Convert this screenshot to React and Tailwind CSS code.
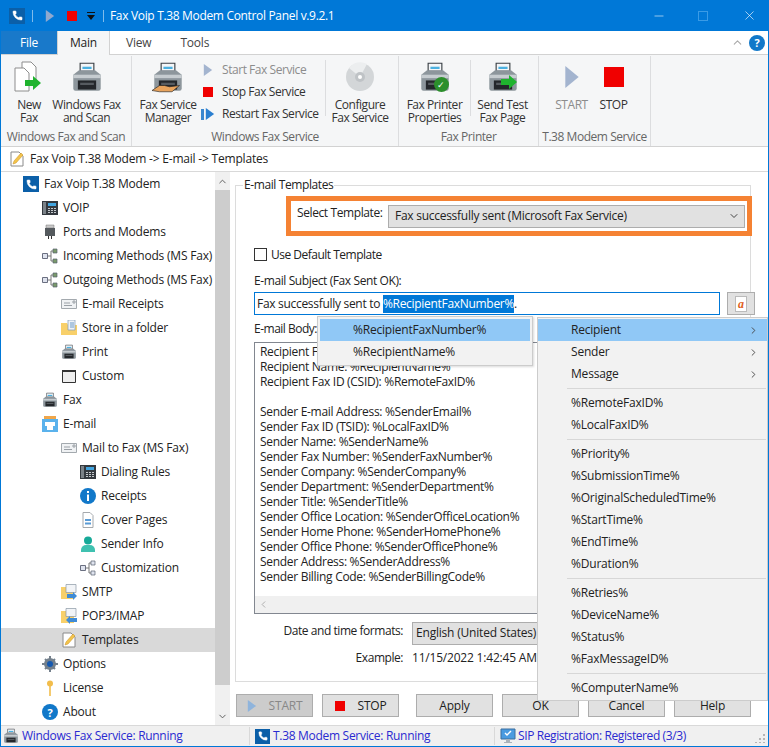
import { Phone, ChevronUp, ChevronDown, ChevronLeft, ChevronRight, X, Minus } from 'lucide-react';

const PhoneBox = ({ size = 16 }) => (
  <span className="flex shrink-0 items-center justify-center bg-[#0b5fa8]" style={{ width: size, height: size }}>
    <Phone size={size - 5} className="fill-white text-white" strokeWidth={1} />
  </span>
);

const Play = ({ className = 'h-3 w-3', color = '#a3b4cf' }) => (
  <svg viewBox="0 0 12 14" preserveAspectRatio="none" className={className}><path d="M1 0l10 7-10 7z" fill={color} /></svg>
);

const Stop = ({ className = 'h-[10px] w-[10px]' }) => <span className={`block shrink-0 bg-[#f00000] ${className}`} />;

const PrinterIcon = ({ className = 'h-7 w-7' }) => (
  <svg viewBox="0 0 28 28" className={className}>
    <path d="M8 2h12v7H8z" fill="#f4f6f8" stroke="#3a3f45" />
    <path d="M10 5h8v2h-8z" fill="#4bb0e0" />
    <path d="M2 12l5-4h14l5 4v12a2 2 0 0 1-2 2H4a2 2 0 0 1-2-2z" fill="#8d969c" />
    <path d="M2 12h24v3H2z" fill="#c6ccd0" />
    <path d="M6 17h16v8H6z" fill="#24272b" />
    <path d="M8 19h12v2H8z" fill="#565b60" />
  </svg>
);

const GreenArrow = ({ className }) => (
  <svg viewBox="0 0 16 14" className={className}><path d="M0 4h8V0l8 7-8 7v-4H0z" fill="#1fb32e" /></svg>
);

const NewFaxIcon = () => (
  <span className="relative block h-8 w-8">
    <svg viewBox="0 0 32 32" className="h-8 w-8">
      <path d="M9 1h9l5 5v18H9z" fill="#fff" stroke="#8d8d8d" />
      <path d="M2 7h9l5 5v18H2z" fill="#fff" stroke="#8d8d8d" />
    </svg>
    <GreenArrow className="absolute left-[12px] top-[15px] h-[14px] w-4" />
  </span>
);

const CdIcon = () => (
  <svg viewBox="0 0 30 30" className="h-[30px] w-[30px]">
    <circle cx="15" cy="15" r="14" fill="#d3d6d8" />
    <path d="M15 15L4 6a14 14 0 0 1 18-4z" fill="#eceeef" />
    <circle cx="15" cy="15" r="5" fill="#bfc3c6" />
    <circle cx="15" cy="15" r="2" fill="#fff" />
  </svg>
);

const NoteIcon = ({ className = 'h-4 w-4' }) => (
  <svg viewBox="0 0 16 16" className={className}>
    <path d="M2 1h8l4 4v10H2z" fill="#fff" stroke="#8a8a8a" />
    <path d="M4 13l1-3 7-8 2 2-7 8z" fill="#f3c44c" stroke="#c98f1f" strokeWidth=".5" />
  </svg>
);

const VoipIcon = () => (
  <svg viewBox="0 0 16 16" className="h-4 w-4">
    <path d="M0 1h16v14H0z" fill="#34393f" />
    <path d="M1 2h3v12H1z" fill="#7b8288" />
    <path d="M6 3h8v3H6z" fill="#42a5e0" />
    <path d="M6 8h2v1H6zM9 8h2v1H9zM12 8h2v1h-2zM6 10h2v1H6zM9 10h2v1H9zM12 10h2v1h-2zM6 12h2v1H6zM9 12h2v1H9zM12 12h2v1h-2z" fill="#c3c8cc" />
  </svg>
);

const PortIcon = () => (
  <svg viewBox="0 0 16 16" className="h-4 w-4">
    <path d="M4 1h8v3H4z" fill="#c9c9c9" stroke="#777" strokeWidth=".5" />
    <path d="M3 4h10v8H3z" fill="#555a5e" />
    <path d="M6 12h1v3H6zM9 12h1v3H9z" fill="#333" />
  </svg>
);

const TreeNodesIcon = ({ fill = '#7a9a6a' }) => (
  <svg viewBox="0 0 16 16" className="h-4 w-4">
    <path d="M5 8h4M9 3v10M9 3h2M9 13h2" stroke="#777" fill="none" />
    <path d="M.5 5.500h5v5h-5z" fill="#dfe3ee" stroke="#6a6f80" />
    <path d="M11 1h4v4h-4zM11 11h4v4h-4z" fill={fill} stroke="#5a6270" strokeWidth=".7" />
  </svg>
);

const EnvelopeIcon = () => (
  <svg viewBox="0 0 16 16" className="h-4 w-4">
    <path d="M.5 3.500h15v9H.5z" fill="#f0f2f4" stroke="#a3a9ae" />
    <path d="M3 7h6M3 9.500h8M12 5h2v2h-2z" stroke="#9aa0a6" fill="none" />
  </svg>
);

const FolderDocIcon = () => (
  <svg viewBox="0 0 16 16" className="h-4 w-4">
    <path d="M0 3h6l1 2h9v10H0z" fill="#f8d06a" />
    <path d="M7 0h7v10H7z" fill="#eef2f7" stroke="#7f9bb8" strokeWidth=".7" />
    <path d="M9 3h4M9 5h4M9 7h4" stroke="#6c9bc8" />
  </svg>
);

const SmallPrinter = () => <PrinterIcon className="h-4 w-4" />;

const WindowIcon = () => (
  <svg viewBox="0 0 16 16" className="h-4 w-4">
    <path d="M1.500 2.500h13v12h-13z" fill="#eee" stroke="#333" />
    <path d="M1 2h14v2H1z" fill="#333" />
  </svg>
);

const EmailIcon = () => (
  <svg viewBox="0 0 16 16" className="h-4 w-4">
    <path d="M2 0h12v4H2z" fill="#f0a64a" />
    <path d="M0 3h16v13H0z" fill="#5ab2ec" />
    <path d="M3 6h10v4H3zM5 10h6v4H5z" fill="#fff" />
  </svg>
);

const InfoIcon = () => (
  <svg viewBox="0 0 16 16" className="h-4 w-4">
    <circle cx="8" cy="8" r="8" fill="#1178c9" />
    <path d="M7 3h2v2H7zM7 6.500h2V13H7z" fill="#fff" />
  </svg>
);

const CoverIcon = () => (
  <svg viewBox="0 0 16 16" className="h-4 w-4">
    <path d="M3 .5h7l3 3v12H3z" fill="#fff" stroke="#a5a9ad" />
    <path d="M5 7h6v2H5zM5 10.500h6v2H5z" fill="#5a9bd5" />
  </svg>
);

const PersonIcon = () => (
  <svg viewBox="0 0 16 16" className="h-4 w-4">
    <circle cx="8" cy="4.500" r="4" fill="#16a998" />
    <path d="M1 16v-2a5 5 0 0 1 5-5h4a5 5 0 0 1 5 5v2z" fill="#3fc1b0" />
  </svg>
);

const SmtpIcon = ({ reverse }) => (
  <svg viewBox="0 0 16 16" className="h-4 w-4">
    <path d="M0 3h6l1 2h6v10H0z" fill="#f8d06a" />
    <path d="M5 .5h10v8H5z" fill="#f2f4f7" stroke="#8a96a3" strokeWidth=".7" />
    <path d={reverse ? 'M16 10H9V8l-4 4 4 4v-2h7z' : 'M6 10h6V8l4 4-4 4v-2H6z'} fill="#3f8bd6" />
  </svg>
);

const GearIcon = () => (
  <svg viewBox="0 0 16 16" className="h-4 w-4">
    <circle cx="8" cy="8" r="6" fill="#74808c" />
    <path d="M7 0h2v16H7zM0 7h16v2H0zM2.300 3.700l1.400-1.400 10 10-1.400 1.400zM12.300 2.300l1.400 1.400-10 10-1.400-1.400z" fill="#74808c" />
    <circle cx="8" cy="8" r="3" fill="#1559b0" />
  </svg>
);

const KeyIcon = () => (
  <svg viewBox="0 0 16 16" className="h-4 w-4">
    <circle cx="8" cy="3.500" r="3" fill="#f2bd4b" />
    <path d="M7.200 6h1.600v10H7.200z" fill="#f2bd4b" />
  </svg>
);

const HelpIcon = ({ className = 'h-4 w-4' }) => (
  <span className={`flex shrink-0 items-center justify-center rounded-full bg-[#1178c9] text-[11px] font-bold leading-none text-white ${className}`}>?</span>
);

const tree = [
  { label: 'Fax Voip T.38 Modem', level: 0, icon: <PhoneBox /> },
  { label: 'VOIP', level: 1, icon: <VoipIcon /> },
  { label: 'Ports and Modems', level: 1, icon: <PortIcon /> },
  { label: 'Incoming Methods (MS Fax)', level: 1, icon: <TreeNodesIcon /> },
  { label: 'Outgoing Methods (MS Fax)', level: 1, icon: <TreeNodesIcon /> },
  { label: 'E-mail Receipts', level: 2, icon: <EnvelopeIcon /> },
  { label: 'Store in a folder', level: 2, icon: <FolderDocIcon /> },
  { label: 'Print', level: 2, icon: <SmallPrinter /> },
  { label: 'Custom', level: 2, icon: <WindowIcon /> },
  { label: 'Fax', level: 1, icon: <SmallPrinter /> },
  { label: 'E-mail', level: 1, icon: <EmailIcon /> },
  { label: 'Mail to Fax (MS Fax)', level: 2, icon: <EnvelopeIcon /> },
  { label: 'Dialing Rules', level: 3, icon: <VoipIcon /> },
  { label: 'Receipts', level: 3, icon: <InfoIcon /> },
  { label: 'Cover Pages', level: 3, icon: <CoverIcon /> },
  { label: 'Sender Info', level: 3, icon: <PersonIcon /> },
  { label: 'Customization', level: 3, icon: <TreeNodesIcon fill="#dfe3ee" /> },
  { label: 'SMTP', level: 2, icon: <SmtpIcon /> },
  { label: 'POP3/IMAP', level: 2, icon: <SmtpIcon reverse /> },
  { label: 'Templates', level: 2, icon: <NoteIcon />, selected: true },
  { label: 'Options', level: 1, icon: <GearIcon /> },
  { label: 'License', level: 1, icon: <KeyIcon /> },
  { label: 'About', level: 1, icon: <HelpIcon /> },
];

const levelPad = ['pl-[22px]', 'pl-[41px]', 'pl-[60px]', 'pl-[79px]'];

const bodyLines = [
  'Recipient Fax Number: %RecipientFaxNumber%',
  'Recipient Name: %RecipientName%',
  'Recipient Fax ID (CSID): %RemoteFaxID%',
  '',
  'Sender E-mail Address: %SenderEmail%',
  'Sender Fax ID (TSID): %LocalFaxID%',
  'Sender Name: %SenderName%',
  'Sender Fax Number: %SenderFaxNumber%',
  'Sender Company: %SenderCompany%',
  'Sender Department: %SenderDepartment%',
  'Sender Title: %SenderTitle%',
  'Sender Office Location: %SenderOfficeLocation%',
  'Sender Home Phone: %SenderHomePhone%',
  'Sender Office Phone: %SenderOfficePhone%',
  'Sender Address: %SenderAddress%',
  'Sender Billing Code: %SenderBillingCode%',
];

const menuGroups = [
  ['%RemoteFaxID%', '%LocalFaxID%'],
  ['%Priority%', '%SubmissionTime%', '%OriginalScheduledTime%', '%StartTime%', '%EndTime%', '%Duration%'],
  ['%Retries%', '%DeviceName%', '%Status%', '%FaxMessageID%'],
  ['%ComputerName%'],
];

function RibbonButton({ icon, lines, width, muted }) {
  return (
    <div className={`flex shrink-0 flex-col items-center ${width}`}>
      <div className="flex h-[36px] items-center justify-center">{icon}</div>
      <div className={`mt-[3px] text-center leading-[13px] ${muted ? 'text-[#8c8c8c]' : 'text-[#333]'}`}>
        {lines.map((l) => <div key={l} className="whitespace-nowrap">{l}</div>)}
      </div>
    </div>
  );
}

function RibbonGroup({ label, width, children, last }) {
  return (
    <div className={`flex h-[90px] shrink-0 flex-col ${last ? '' : 'border-r border-[#dcdddf]'} ${width}`}>
      <div className="flex flex-1 pt-[3px]">{children}</div>
      <div className="pb-[2px] text-center leading-[14px] whitespace-nowrap text-[#666]">{label}</div>
    </div>
  );
}

function SmallAction({ icon, label, muted }) {
  return (
    <div className="flex h-[22px] items-center">
      <span className="flex w-[18px] justify-center">{icon}</span>
      <span className={`ml-[5px] whitespace-nowrap ${muted ? 'text-[#8c8c8c]' : 'text-[#333]'}`}>{label}</span>
    </div>
  );
}

function FootButton({ children, width = 'w-[77px]', muted }) {
  return (
    <div className={`flex h-[23px] shrink-0 items-center justify-center border border-[#adadad] ${muted ? 'bg-[#cccccc] text-[#888]' : 'bg-[#e1e1e1] text-[#222]'} ${width}`}>
      {children}
    </div>
  );
}

function MenuRow({ label, arrow, active }) {
  return (
    <div className={`flex h-[22px] items-center pl-[33px] pr-[8px] ${active ? 'bg-[#90c8f6]' : ''}`}>
      <span className="flex-1 whitespace-nowrap">{label}</span>
      {arrow && <ChevronRight size={11} className="text-[#444]" />}
    </div>
  );
}

export default function App() {
  return (
    <div className="relative flex h-[747px] w-[769px] flex-col overflow-hidden border-x border-b border-[#0078d7] bg-white font-['Open_Sans','Noto_Sans',sans-serif] text-[12px] tracking-[-0.2px] text-[#222]">
      {/* title bar */}
      <div className="-mx-px flex h-[31px] shrink-0 items-center bg-[#0078d7] text-white">
        <div className="ml-[9px]"><PhoneBox size={16} /></div>
        <span className="ml-[7px] h-[12px] w-px bg-[#7fbbeb]" />
        <Play className="ml-[12px] h-[12px] w-[10px]" color="#8fa9cf" />
        <Stop className="ml-[12px] h-[10px] w-[10px]" />
        <svg viewBox="0 0 8 8" className="ml-[10px] h-2 w-2"><path d="M0 0h8v1H0zM0 3h8L4 8z" fill="#111" /></svg>
        <span className="ml-[8px] h-[12px] w-px bg-[#7fbbeb]" />
        <span className="ml-[6px] tracking-[-0.33px] whitespace-nowrap">Fax Voip T.38 Modem Control Panel v.9.2.1</span>
        <div className="ml-auto flex items-center">
          <Minus size={14} strokeWidth={1} />
          <span className="ml-[32px] h-[10px] w-[10px] border border-[#3a9be6]" />
          <X size={15} strokeWidth={1} className="ml-[34px] mr-[12px]" />
        </div>
      </div>

      {/* tabs */}
      <div className="flex h-[24px] shrink-0 items-stretch border-b border-[#d2d2d2] bg-white">
        <div className="flex w-[56px] items-center justify-center bg-[#1979ca] text-white">File</div>
        <div className="-mb-px flex w-[53px] items-center justify-center border-x border-[#d2d2d2] bg-[#f5f6f7]">Main</div>
        <div className="ml-[16px] flex items-center text-[#444]">View</div>
        <div className="ml-[29px] flex items-center text-[#444]">Tools</div>
        <div className="ml-auto mr-[3px] flex items-center">
          <ChevronUp size={13} className="text-[#aaa]" />
          <HelpIcon className="ml-[5px] h-[16px] w-[16px]" />
        </div>
      </div>

      {/* ribbon */}
      <div className="flex h-[92px] shrink-0 border-b border-[#d2d2d2] bg-[#f5f6f7] pt-[1px] tracking-[-0.45px]">
        <RibbonGroup label="Windows Fax and Scan" width="w-[131px]">
          <RibbonButton width="w-[56px]" icon={<NewFaxIcon />} lines={['New', 'Fax']} />
          <RibbonButton width="w-[59px]" icon={<PrinterIcon className="h-8 w-8" />} lines={['Windows Fax', 'and Scan']} />
        </RibbonGroup>
        <RibbonGroup label="Windows Fax Service" width="w-[267px]">
          <RibbonButton width="w-[72px]" icon={
            <span className="relative block h-8 w-8">
              <PrinterIcon className="h-8 w-8" />
              <svg viewBox="0 0 24 8" className="absolute -left-[2px] top-[22px] h-[10px] w-[34px]"><path d="M0 6l6-4h4l4 1 8-1-6 5H6z" fill="#e8a35c" stroke="#222" strokeWidth=".5" /></svg>
            </span>
          } lines={['Fax Service', 'Manager']} />
          <div className="-ml-[5px] flex w-[126px] shrink-0 flex-col">
            <SmallAction muted icon={<Play className="h-[12px] w-[10px]" />} label="Start Fax Service" />
            <SmallAction icon={<Stop />} label="Stop Fax Service" />
            <SmallAction icon={
              <span className="flex items-center gap-px">
                <span className="h-[11px] w-[3px] bg-[#3a87cf]" />
                <Play className="h-[12px] w-[10px]" color="#2a7fd0" />
              </span>
            } label="Restart Fax Service" />
          </div>
          <div className="mt-[1px] h-[56px] w-px shrink-0 bg-[#dcdddf]" />
          <RibbonButton width="w-[68px]" icon={<CdIcon />} lines={['Configure', 'Fax Service']} />
        </RibbonGroup>
        <RibbonGroup label="Fax Printer" width="w-[140px]">
          <RibbonButton width="w-[71px]" icon={
            <span className="relative block h-8 w-8">
              <PrinterIcon className="h-8 w-8" />
              <span className="absolute left-[15px] top-[16px] flex h-[15px] w-[15px] items-center justify-center rounded-full bg-[#2c8f2c] text-[9px] leading-none text-white">✓</span>
            </span>
          } lines={['Fax Printer', 'Properties']} />
          <div className="mt-[1px] h-[56px] w-px shrink-0 bg-[#dcdddf]" />
          <RibbonButton width="w-[63px]" icon={
            <span className="relative block h-8 w-8">
              <PrinterIcon className="h-8 w-8" />
              <GreenArrow className="absolute left-[14px] top-[14px] h-[14px] w-4" />
            </span>
          } lines={['Send Test', 'Fax Page']} />
        </RibbonGroup>
        <RibbonGroup label="T.38 Modem Service" width="w-[112px]">
          <div className="flex w-full justify-center gap-[6px] pr-[4px]">
            <RibbonButton width="w-[36px]" muted icon={<Play className="h-[22px] w-[16px]" />} lines={['START']} />
            <RibbonButton width="w-[36px]" icon={<Stop className="h-5 w-5" />} lines={['STOP']} />
          </div>
        </RibbonGroup>
      </div>

      {/* breadcrumb */}
      <div className="flex h-[25px] shrink-0 items-center border-b border-[#d9d9d9] pl-[8px]">
        <NoteIcon />
        <span className="ml-[5px]">Fax Voip T.38 Modem -&gt; E-mail -&gt; Templates</span>
      </div>

      {/* main */}
      <div className="flex min-h-0 flex-1">
        <div className="flex w-[229px] shrink-0">
          <div className="flex w-[214px] shrink-0 flex-col">
            {tree.map((t) => (
              <div key={t.label} className={`flex h-[24px] shrink-0 items-center ${levelPad[t.level]} ${t.selected ? 'bg-[#d9d9d9]' : ''}`}>
                {t.icon}
                <span className="ml-[5px] whitespace-nowrap">{t.label}</span>
              </div>
            ))}
          </div>
          <div className="flex w-[15px] shrink-0 flex-col bg-[#f0f0f0]">
            <div className="flex h-[18px] items-center justify-center"><ChevronUp size={11} className="text-[#555]" /></div>
            <div className="h-[495px] bg-[#cdcdcd]" />
            <div className="mt-auto flex h-[18px] items-center justify-center"><ChevronDown size={11} className="text-[#555]" /></div>
          </div>
        </div>

        <div className="flex min-w-0 flex-1 flex-col">
          <div className="relative ml-[5px] mr-[17px] mt-[13px] h-[497px] shrink-0 border border-[#dcdcdc]">
            <span className="absolute -top-[9px] left-[7px] bg-white px-[1px] leading-[16px] tracking-[-0.4px]">E-mail Templates</span>
            <div className="ml-[50px] -mr-[2px] mt-[10px] flex h-[40px] items-center border-[5px] border-[#f58233] pl-[6px] pr-[2px]">
              <span className="mb-[6px] w-[91px] shrink-0 whitespace-nowrap tracking-[-0.4px]">Select Template:</span>
              <div className="flex h-[23px] flex-1 items-center justify-between border border-[#adadad] bg-[#e1e1e1] pl-[6px] pr-[4px] tracking-[-0.27px]">
                <span>Fax successfully sent (Microsoft Fax Service)</span>
                <ChevronDown size={12} className="text-[#444]" />
              </div>
            </div>
            <div className="ml-[18px] mr-[-5px]">
              <div className="mt-[12px] flex h-[13px] items-center">
                <span className="h-[13px] w-[13px] border border-[#333] bg-white" />
                <span className="ml-[4px] tracking-[-0.5px]">Use Default Template</span>
              </div>
              <div className="mt-[12px] leading-[16px] tracking-[-0.4px]">E-mail Subject (Fax Sent OK):</div>
              <div className="mt-[3px] flex h-[23px] gap-[7px]">
                <div className="flex flex-1 items-center border border-[#0078d7] pl-[2px] tracking-[-0.3px]">
                  <span className="whitespace-pre">Fax successfully sent to </span>
                  <span className="bg-[#0078d7] text-white">%RecipientFaxNumber%</span>
                  <span>.</span>
                </div>
                <div className="flex w-[28px] items-center justify-center border border-[#adadad] bg-[#e1e1e1]">
                  <span className="flex h-[16px] w-[12px] items-center justify-center border border-[#bbb] bg-white font-['Liberation_Serif',serif] text-[12px] font-bold italic leading-none text-[#e0601c]">a</span>
                </div>
              </div>
              <div className="mt-[6px] leading-[16px] tracking-[-0.5px]">E-mail Body:</div>
              <div className="mt-[5px] mr-[10px] flex h-[272px] flex-col border border-[#828790]">
                <div className="flex-1 overflow-hidden pl-[5px] pt-[1px] leading-[15px] tracking-[-0.3px]">
                  {bodyLines.map((l, i) => <div key={i} className="h-[15px] whitespace-nowrap">{l}</div>)}
                </div>
                <div className="flex h-[17px] shrink-0 items-center bg-[#f0f0f0] pl-[3px]">
                  <ChevronLeft size={11} className="text-[#aaa]" />
                </div>
              </div>
              <div className="mt-[7px] flex h-[24px] items-center">
                <span className="w-[149px] shrink-0 pb-[4px] text-right tracking-[-0.45px]">Date and time formats:</span>
                <div className="ml-[9px] flex h-[23px] flex-1 items-center border border-[#adadad] bg-[#e1e1e1] pl-[3px]">English (United States)</div>
              </div>
              <div className="mt-[1px] flex h-[24px] items-center">
                <span className="w-[149px] shrink-0 text-right tracking-[-0.45px]">Example:</span>
                <span className="ml-[9px] whitespace-nowrap">11/15/2022 1:42:45 AM</span>
              </div>
            </div>
          </div>
          <div className="ml-[6px] mt-[12px] flex items-center">
            <FootButton muted>
              <Play className="mr-[12px] h-[12px] w-[10px]" color="#8fb4dc" />START
            </FootButton>
            <div className="ml-[9px]"><FootButton><Stop className="mr-[13px] h-[10px] w-[10px]" />STOP</FootButton></div>
            <div className="ml-[17px]"><FootButton>Apply</FootButton></div>
            <div className="ml-[9px]"><FootButton>OK</FootButton></div>
            <div className="ml-[9px]"><FootButton>Cancel</FootButton></div>
            <div className="ml-[9px]"><FootButton>Help</FootButton></div>
          </div>
        </div>
      </div>

      {/* status bar */}
      <div className="flex h-[21px] shrink-0 items-center border-t border-[#d9d9d9] bg-[#f0f0f0] tracking-[-0.3px] text-[#2a2ad0]">
        <div className="flex w-[249px] shrink-0 items-center border-r border-[#d9d9d9] pl-[2px]">
          <SmallPrinter />
          <span className="ml-[3px] whitespace-nowrap">Windows Fax Service: Running</span>
        </div>
        <div className="flex w-[245px] shrink-0 items-center border-r border-[#d9d9d9] pl-[5px]">
          <PhoneBox size={15} />
          <span className="ml-[3px] whitespace-nowrap">T.38 Modem Service: Running</span>
        </div>
        <div className="flex flex-1 items-center pl-[5px]">
          <svg viewBox="0 0 16 16" className="h-4 w-4">
            <path d="M1 1h14v10H1z" fill="#4a9be0" stroke="#3a6f9f" />
            <path d="M6 11h4v3H6zM4 14h8v1H4z" fill="#aab2ba" />
            <path d="M5 5l2 2 4-4" stroke="#fff" fill="none" strokeWidth="1.400" />
          </svg>
          <span className="ml-[2px] whitespace-nowrap tracking-[-0.4px]">SIP Registration: Registered (3/3)</span>
          <svg viewBox="0 0 10 10" className="ml-auto mr-[3px] mt-[4px] h-[10px] w-[10px]">
            <path d="M8 1h2v2H8zM4 5h2v2H4zM8 5h2v2H8zM0 9h2v1H0zM4 9h2v1H4zM8 9h2v1H8z" fill="#b5b5b5" />
          </svg>
        </div>
      </div>

      {/* template field menus */}
      <div className="absolute left-[316px] top-[316px] w-[216px] border border-[#cccccc] bg-[#f2f2f2] p-[2px] text-[#222] shadow-[1px_1px_2px_rgba(0,0,0,0.15)]">
        <MenuRow label="%RecipientFaxNumber%" active />
        <MenuRow label="%RecipientName%" />
      </div>
      <div className="absolute left-[536px] top-[317px] w-[231px] border border-[#cccccc] bg-[#f2f2f2] py-[1px] text-[#222]">
        <MenuRow label="Recipient" arrow active />
        <MenuRow label="Sender" arrow />
        <MenuRow label="Message" arrow />
        {menuGroups.map((g) => (
          <div key={g[0]}>
            <div className="ml-[29px] mr-[1px] my-[3px] h-px bg-[#d7d7d7]" />
            {g.map((m) => <MenuRow key={m} label={m} />)}
          </div>
        ))}
      </div>
    </div>
  );
}
